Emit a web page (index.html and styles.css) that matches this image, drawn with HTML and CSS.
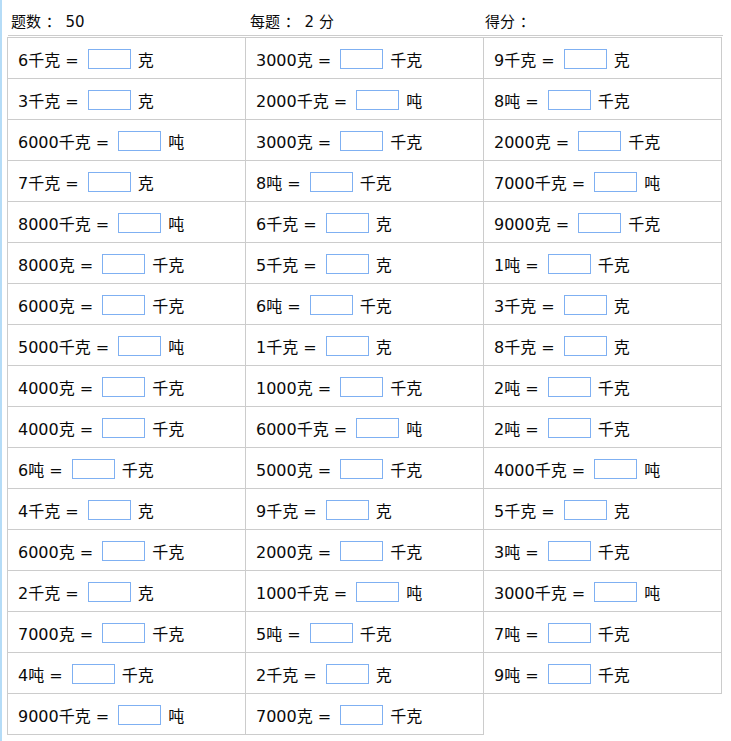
FILE: index.html
```html
<!DOCTYPE html>
<html lang="zh">
<head>
<meta charset="utf-8">
<title>练习</title>
<link rel="stylesheet" href="styles.css">
</head>
<body>
<div class="page">
  <div class="header">
    <div class="hcell">题数 <span class="colon">：</span> 50</div>
    <div class="hcell">每题 <span class="colon">：</span> 2 分</div>
    <div class="hcell">得分 <span class="colon">：</span></div>
  </div>
  <div class="grid">
    <div class="cell"><span>6千克 =</span><span class="box"></span><span>克</span></div>
    <div class="cell"><span>3000克 =</span><span class="box"></span><span>千克</span></div>
    <div class="cell"><span>9千克 =</span><span class="box"></span><span>克</span></div>

    <div class="cell"><span>3千克 =</span><span class="box"></span><span>克</span></div>
    <div class="cell"><span>2000千克 =</span><span class="box"></span><span>吨</span></div>
    <div class="cell"><span>8吨 =</span><span class="box"></span><span>千克</span></div>

    <div class="cell"><span>6000千克 =</span><span class="box"></span><span>吨</span></div>
    <div class="cell"><span>3000克 =</span><span class="box"></span><span>千克</span></div>
    <div class="cell"><span>2000克 =</span><span class="box"></span><span>千克</span></div>

    <div class="cell"><span>7千克 =</span><span class="box"></span><span>克</span></div>
    <div class="cell"><span>8吨 =</span><span class="box"></span><span>千克</span></div>
    <div class="cell"><span>7000千克 =</span><span class="box"></span><span>吨</span></div>

    <div class="cell"><span>8000千克 =</span><span class="box"></span><span>吨</span></div>
    <div class="cell"><span>6千克 =</span><span class="box"></span><span>克</span></div>
    <div class="cell"><span>9000克 =</span><span class="box"></span><span>千克</span></div>

    <div class="cell"><span>8000克 =</span><span class="box"></span><span>千克</span></div>
    <div class="cell"><span>5千克 =</span><span class="box"></span><span>克</span></div>
    <div class="cell"><span>1吨 =</span><span class="box"></span><span>千克</span></div>

    <div class="cell"><span>6000克 =</span><span class="box"></span><span>千克</span></div>
    <div class="cell"><span>6吨 =</span><span class="box"></span><span>千克</span></div>
    <div class="cell"><span>3千克 =</span><span class="box"></span><span>克</span></div>

    <div class="cell"><span>5000千克 =</span><span class="box"></span><span>吨</span></div>
    <div class="cell"><span>1千克 =</span><span class="box"></span><span>克</span></div>
    <div class="cell"><span>8千克 =</span><span class="box"></span><span>克</span></div>

    <div class="cell"><span>4000克 =</span><span class="box"></span><span>千克</span></div>
    <div class="cell"><span>1000克 =</span><span class="box"></span><span>千克</span></div>
    <div class="cell"><span>2吨 =</span><span class="box"></span><span>千克</span></div>

    <div class="cell"><span>4000克 =</span><span class="box"></span><span>千克</span></div>
    <div class="cell"><span>6000千克 =</span><span class="box"></span><span>吨</span></div>
    <div class="cell"><span>2吨 =</span><span class="box"></span><span>千克</span></div>

    <div class="cell"><span>6吨 =</span><span class="box"></span><span>千克</span></div>
    <div class="cell"><span>5000克 =</span><span class="box"></span><span>千克</span></div>
    <div class="cell"><span>4000千克 =</span><span class="box"></span><span>吨</span></div>

    <div class="cell"><span>4千克 =</span><span class="box"></span><span>克</span></div>
    <div class="cell"><span>9千克 =</span><span class="box"></span><span>克</span></div>
    <div class="cell"><span>5千克 =</span><span class="box"></span><span>克</span></div>

    <div class="cell"><span>6000克 =</span><span class="box"></span><span>千克</span></div>
    <div class="cell"><span>2000克 =</span><span class="box"></span><span>千克</span></div>
    <div class="cell"><span>3吨 =</span><span class="box"></span><span>千克</span></div>

    <div class="cell"><span>2千克 =</span><span class="box"></span><span>克</span></div>
    <div class="cell"><span>1000千克 =</span><span class="box"></span><span>吨</span></div>
    <div class="cell"><span>3000千克 =</span><span class="box"></span><span>吨</span></div>

    <div class="cell"><span>7000克 =</span><span class="box"></span><span>千克</span></div>
    <div class="cell"><span>5吨 =</span><span class="box"></span><span>千克</span></div>
    <div class="cell"><span>7吨 =</span><span class="box"></span><span>千克</span></div>

    <div class="cell"><span>4吨 =</span><span class="box"></span><span>千克</span></div>
    <div class="cell"><span>2千克 =</span><span class="box"></span><span>克</span></div>
    <div class="cell"><span>9吨 =</span><span class="box"></span><span>千克</span></div>

    <div class="cell"><span>9000千克 =</span><span class="box"></span><span>吨</span></div>
    <div class="cell"><span>7000克 =</span><span class="box"></span><span>千克</span></div>
  </div>
</div>
</body>
</html>
```

FILE: styles.css
```css
html, body {
  margin: 0;
  padding: 0;
  background: #ffffff;
}
body {
  font-family: "DejaVu Sans", "Noto Sans CJK SC", sans-serif;
  color: #0a0a0a;
  min-height: 741px;
  border-left: 2px solid #b5dcf7;
  box-sizing: border-box;
}
.page {
  padding-left: 5px;
}
.header {
  display: grid;
  grid-template-columns: 239px 235px 240px;
  height: 35px;
  margin-left: 1px;
  width: 715px;
  border-bottom: 1px solid #cccccc;
  align-items: center;
  font-size: 15px;
}
.hcell {
  padding-left: 3px;
  padding-top: 5px;
}
.colon {
  font-family: "Noto Sans CJK TC", "Noto Sans CJK SC", sans-serif;
}
.grid {
  display: grid;
  grid-template-columns: 239px 238px 238px;
  grid-template-rows: 42px;
  grid-auto-rows: 41px;
  margin-top: 1px;
  width: 715px;
}
.cell {
  display: flex;
  align-items: center;
  font-size: 16px;
  padding-left: 10px;
  padding-top: 2px;
  border-right: 1px solid #cccccc;
  border-bottom: 1px solid #cccccc;
  white-space: nowrap;
  box-sizing: border-box;
}
.cell:nth-child(3n+1) {
  border-left: 1px solid #cccccc;
}
.cell:nth-child(-n+3) {
  border-top: 1px solid #cccccc;
}
.box {
  display: inline-block;
  width: 41px;
  height: 18px;
  border: 1px solid #7fb0f2;
  margin: 0 7px 0 9px;
}
```
